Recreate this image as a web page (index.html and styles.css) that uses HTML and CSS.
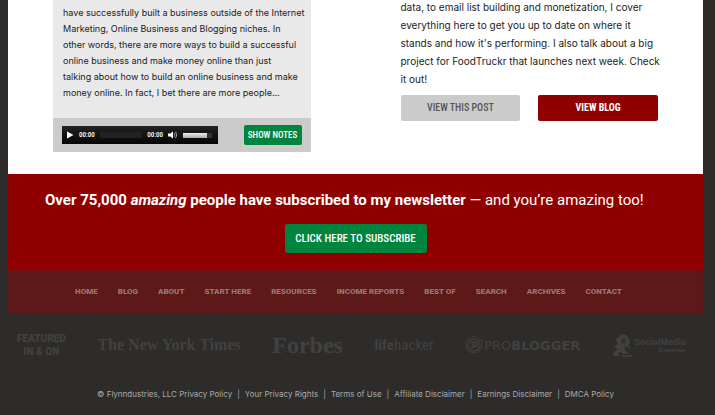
FILE: index.html
```html
<!DOCTYPE html>
<html lang="en">
<head>
<meta charset="utf-8">
<title>Smart Passive Income</title>
<meta name="viewport" content="width=device-width, initial-scale=1">
<link rel="stylesheet" href="styles.css">
</head>
<body>
<div class="page">
  <main class="columns">
    <article class="podcast">
      <p class="podcast-text">of PI Podcast involve success stories from those who<br>have successfully built a business outside of the Internet<br>Marketing, Online Business and Blogging niches. In<br>other words, there are more ways to build a successful<br>online business and make money online than just<br>talking about how to build an online business and make<br>money online. In fact, I bet there are more people...</p>
      <div class="podcast-bar">
        <div class="player">
          <button class="player-button" type="button" aria-label="Play">
            <svg width="8" height="8" viewBox="0 0 8 8"><path d="M1 0.5 7.5 4 1 7.5Z" fill="#fff"/></svg>
          </button>
          <span class="time">00:00</span>
          <span class="track"></span>
          <span class="time">00:00</span>
          <button class="player-button" type="button" aria-label="Mute">
            <svg width="10" height="8" viewBox="0 0 10 8"><path d="M0 2.5H2.5L5 .3V7.7L2.5 5.5H0Z" fill="#fff"/><path d="M6.3 2.3Q7.4 4 6.3 5.7M7.6 .8Q9.8 4 7.6 7.2" fill="none" stroke="#aaa" stroke-width=".9"/></svg>
          </button>
          <span class="volume"><span class="volume-level"></span></span>
        </div>
        <a class="button button-notes" href="#">SHOW NOTES</a>
      </div>
    </article>
    <article class="post">
      <p class="post-text">data, to email list building and monetization, I cover<br>everything here to get you up to date on where it<br>stands and how it's performing. I also talk about a big<br>project for FoodTruckr that launches next week. Check<br>it out!</p>
      <div class="post-actions">
        <a class="button button-post" href="#">VIEW THIS POST</a>
        <a class="button button-blog" href="#">VIEW BLOG</a>
      </div>
    </article>
  </main>
  <section class="newsletter">
    <p class="newsletter-text"><strong>Over 75,000 <em>amazing</em> people have subscribed to my newsletter</strong> — and you’re amazing too!</p>
    <a class="button button-subscribe" href="#">CLICK HERE TO SUBSCRIBE</a>
  </section>
  <nav class="nav">
    <a href="#">HOME</a><a href="#">BLOG</a><a href="#">ABOUT</a><a href="#">START HERE</a><a href="#">RESOURCES</a><a href="#">INCOME REPORTS</a><a href="#">BEST OF</a><a href="#">SEARCH</a><a href="#">ARCHIVES</a><a href="#">CONTACT</a>
  </nav>
</div>
<footer class="footer">
  <div class="featured">
    <span class="featured-label">FEATURED<br>IN &amp; ON</span>
    <span class="logo-times">The New York Times</span>
    <span class="logo-forbes">Forbes</span>
    <span class="logo-lifehacker"><b>life</b>hacker</span>
    <span class="logo-problogger">
      <svg width="18" height="18" viewBox="0 0 18 18" fill="none" stroke="currentColor"><path d="M4 2.2A8.2 8.2 0 1 0 14 2.2M6.500 1.200A8.200 8.200 0 0 1 11.500 1.200" stroke-width="1"/><circle cx="9" cy="9" r="6" stroke-width="1.200"/><path d="M5.500 6.500H10.500a2 2 0 0 1 0 4H7V13.500M6.500 8.500H10" stroke-width="1.300"/></svg>
      <span>PRO<b>BLOGGER</b></span>
    </span>
    <span class="logo-social">
      <svg width="21" height="23" viewBox="0 0 21 23"><path d="M3 7Q4 4 7 3.500Q8 0 12 .5Q16 1 17 5L18 8L16 12L12 13L13 16L16 19V20H11L9 18L6 20L8 22H1L2 18L5 16L4 14L1 13L5 11L6 8Z" fill="currentColor"/><circle cx="11.500" cy="7" r="3" fill="#2d2c2a" stroke="currentColor"/><circle cx="12" cy="7" r="1" fill="currentColor"/><path d="M13 10 18 14M10 22H20" stroke="currentColor" stroke-width="1.500"/></svg>
      <span class="social-name"><span>SocialMedia</span><small>Examiner</small></span>
    </span>
  </div>
  <div class="legal">
    <a href="#">© Flynndustries, LLC Privacy Policy</a><span>|</span><a href="#">Your Privacy Rights</a><span>|</span><a href="#">Terms of Use</a><span>|</span><a href="#">Affiliate Disclaimer</a><span>|</span><a href="#">Earnings Disclaimer</a><span>|</span><a href="#">DMCA Policy</a>
  </div>
</footer>
</body>
</html>
```
FILE: styles.css
```css
* { box-sizing: border-box; }
body {
  margin: 0;
  background: #2d2c2a;
  color: #222;
  font-family: Inter, Roboto, sans-serif;
  font-size: 9px;
}
a { color: inherit; text-decoration: none; }
p { margin: 0; }
.page { margin: 0 12px 0 8px; background: #fff; }

.columns {
  display: grid;
  grid-template-columns: minmax(0, 1fr) minmax(0, 1fr);
  gap: 90px;
  margin-top: -11px;
  padding: 0 45px 22px;
}
.podcast { background: #e9e9e9; }
.podcast-text {
  padding: 0 0 17px 10px;
  font-size: 9px;
  line-height: 16px;
  white-space: nowrap;
}
.podcast-bar {
  display: flex;
  align-items: center;
  justify-content: space-between;
  height: 34px;
  padding: 0 9px;
  background: #cbcbcb;
}
.player {
  display: flex;
  align-items: center;
  gap: 5px;
  width: 156px;
  height: 18px;
  padding: 0 6px 0 4px;
  background: linear-gradient(#222, #050505);
}
.player-button {
  display: flex;
  padding: 0;
  border: 0;
  background: none;
}
.time { color: #fff; font: 500 7px "Roboto Condensed", Roboto, sans-serif; }
.track { flex: 1; height: 6px; background: #222; }
.volume { width: 29px; height: 5px; background: #333; }
.volume-level { display: block; width: 24px; height: 5px; background: linear-gradient(#eee, #aaa); }

.button {
  display: block;
  border-radius: 2px;
  color: #fff;
  font-family: "Roboto Condensed", Roboto, sans-serif;
  font-weight: bold;
  text-align: center;
  white-space: nowrap;
}
.button-notes { width: 58px; background: #00853f; font-size: 9px; font-weight: 500; line-height: 20px; }

.post { padding-top: 9px; }
.post-text { font-size: 10px; line-height: 18px; white-space: nowrap; }
.post-actions {
  display: grid;
  grid-template-columns: 1fr 1fr;
  gap: 18px;
  padding-top: 7px;
}
.button-post, .button-blog { font-size: 10px; line-height: 26px; }
.button-post { background: #cbcbcb; color: #555; font-weight: 500; }
.button-blog { background: #900000; }

.newsletter {
  padding: 14px 37px 17px;
  background: #900000;
  color: #fff;
}
.newsletter-text { font-family: Roboto, sans-serif; font-size: 15px; line-height: 24px; white-space: nowrap; }
.button-subscribe {
  width: 142px;
  margin: 12px auto 0;
  border-radius: 3px;
  background: #00853f;
  font-size: 11px;
  font-weight: 500;
  line-height: 29px;
}
.nav {
  display: flex;
  justify-content: center;
  gap: 20px;
  padding: 0 14px 0 0;
  border-top: 1px solid #701010;
  background: #5d1918;
  color: #957575;
  font-family: Roboto, sans-serif;
  font-size: 8px;
  font-weight: 900;
  line-height: 42px;
  white-space: nowrap;
}

.footer { padding: 17px 29px 0 17px; }
.featured {
  display: flex;
  align-items: center;
  justify-content: space-between;
  height: 30px;
  color: #43413f;
  white-space: nowrap;
}
.featured-label { font-family: Roboto, sans-serif; font-size: 10px; font-weight: 900; line-height: 13px; text-align: center; }
.logo-times { font: bold 16px "Liberation Serif", serif; }
.logo-forbes { font: bold 24px "Liberation Serif", serif; }
.logo-lifehacker { font-family: "Roboto Condensed", Roboto, sans-serif; font-size: 15px; }
.logo-problogger { display: flex; align-items: center; gap: 1px; font: 13px "DejaVu Sans", sans-serif; }
.logo-social { display: flex; align-items: center; gap: 1px; }
.social-name { display: flex; flex-direction: column; font: bold 9px/9px "Liberation Sans", sans-serif; }
.social-name small { font-size: 6px; line-height: 6px; text-align: right; }
.legal {
  display: flex;
  justify-content: center;
  gap: 5px;
  padding: 26px 0 0 8px;
  color: #aaa;
  font-size: 8px;
  line-height: 16px;
  white-space: nowrap;
}
```
